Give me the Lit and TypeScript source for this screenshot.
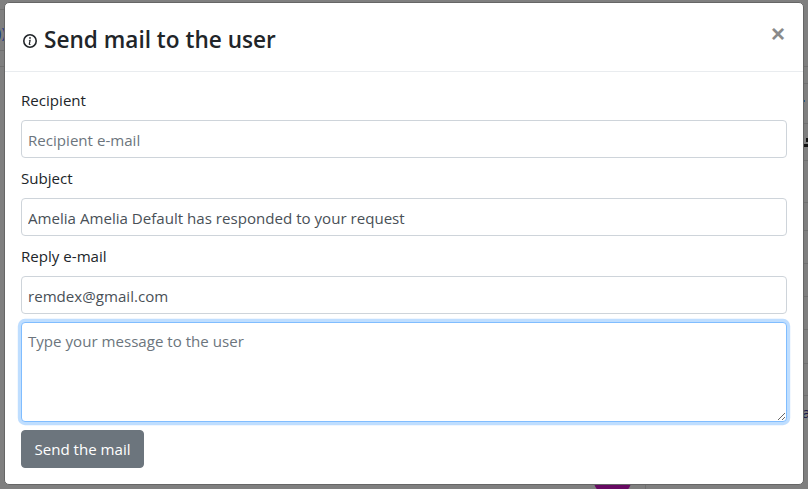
import { LitElement, html, css } from "lit";
import { customElement } from "lit/decorators.js";

const LEFT_LINES = [9, 50, 66];
const RIGHT_LINES = [66, 83, 123, 160, 202, 230, 263, 296, 329, 363, 395];

@customElement("app-root")
export class AppRoot extends LitElement {
  static styles = css`
    :host {
      display: block;
      position: relative;
      width: 808px;
      height: 489px;
      overflow: hidden;
      background: #7f7f7f;
      font-family: "Open Sans", "Noto Sans", sans-serif;
      color: #212529;
      box-sizing: border-box;
      padding: 2px 4px 0;
    }
    * { box-sizing: border-box; }
    .blob {
      position: absolute;
      left: 593px;
      top: 458px;
      width: 39px;
      height: 39px;
      border-radius: 50%;
      background: #660a62;
    }
    .vline { position: absolute; left: 645px; top: 480px; width: 1px; height: 9px; background: #707070; }
    .hl { position: absolute; height: 1px; background: #707070; width: 6px; }
    .hl.l { left: 0; }
    .hl.r { right: 0; }
    .paren {
      position: absolute;
      left: -3px;
      top: 22px;
      font-size: 15px;
      line-height: 20px;
      color: #1d3a86;
    }
    .letter {
      position: absolute;
      left: 802px;
      top: 402px;
      font-size: 15px;
      line-height: 20px;
      color: #1a1a4a;
    }
    .mark { position: absolute; background: #111; }
    .m1 { left: 806px; top: 138px; width: 2px; height: 4px; }
    .m2 { left: 804px; top: 144px; width: 4px; height: 3px; }
    .tick { position: absolute; left: 804px; top: 100px; width: 1px; height: 2px; background: #24557f; }
    .modal {
      position: relative;
      background: #fff;
      border: 1px solid #666;
      border-radius: 5px;
      height: 483px;
      display: flex;
      flex-direction: column;
    }
    .header {
      height: 69px;
      padding: 0 18px;
      border-bottom: 1px solid #e9ecef;
      display: flex;
      align-items: flex-start;
      justify-content: space-between;
    }
    .title {
      margin: 20px 0 0;
      font-size: 22.6px;
      line-height: 33px;
      font-weight: 600;
      display: flex;
      align-items: center;
      gap: 7px;
    }
    .title svg { margin-top: 3px; }
    .close {
      font-size: 24px;
      line-height: 24px;
      font-weight: 700;
      color: #8a8a8a;
      margin: 19px 0 0;
      font-family: "Liberation Sans", sans-serif;
    }
    .body {
      padding: 16px 16px 0;
      display: flex;
      flex-direction: column;
    }
    label {
      display: block;
      font-size: 15.1px;
      line-height: 24px;
      margin-bottom: 8px;
    }
    .input, .area {
      display: block;
      width: 100%;
      border: 1px solid #ced4da;
      border-radius: 4px;
      padding: 6px;
      margin-bottom: 8px;
      font: inherit;
      font-size: 15.1px;
      line-height: 24px;
      color: #495057;
      background: #fff;
      outline: none;
    }
    .input { height: 38px; padding: 7px 6px 5px; }
    .input::placeholder, .area::placeholder { color: #6c757d; opacity: 1; }
    .area {
      height: 100px;
      border-color: #80bdff;
      box-shadow: 0 0 0 3.2px rgba(0, 123, 255, 0.25);
      resize: both;
    }
    button {
      align-self: flex-start;
      width: 123px;
      height: 38px;
      padding: 0;
      border: 1px solid #6c757d;
      border-radius: 4px;
      background: #6c757d;
      color: #fff;
      font: inherit;
      font-size: 15.1px;
    }
  `;

  render() {
    return html`
      ${LEFT_LINES.map((y) => html`<div class="hl l" style="top:${y}px"></div>`)}
      ${RIGHT_LINES.map((y) => html`<div class="hl r" style="top:${y}px"></div>`)}
      <div class="paren">))</div>
      <div class="letter">a</div>
      <div class="mark m1"></div>
      <div class="mark m2"></div>
      <div class="tick"></div>
      <div class="blob"></div>
      <div class="vline"></div>
      <div class="modal">
        <div class="header">
          <h4 class="title">
            <svg width="14" height="14" viewBox="0 0 16 16" fill="#212529">
              <circle cx="8" cy="8" r="7.1" fill="none" stroke="#212529" stroke-width="1.8" />
              <path d="m8.93 6.59-2.29.28-.08.38.45.08c.29.07.35.18.29.47l-.74 3.47c-.2.9.1 1.32.8 1.32.55 0 1.18-.25 1.47-.6l.09-.42c-.2.18-.5.25-.7.25-.27 0-.37-.2-.3-.53L8.93 6.6zM9 4.5a1 1 0 1 1-2 0 1 1 0 0 1 2 0z" />
            </svg>
            Send mail to the user
          </h4>
          <span class="close">×</span>
        </div>
        <div class="body">
          <label>Recipient</label>
          <input class="input" placeholder="Recipient e-mail" />
          <label>Subject</label>
          <input class="input" value="Amelia Amelia Default has responded to your request" />
          <label>Reply e-mail</label>
          <input class="input" value="remdex@gmail.com" />
          <textarea class="area" placeholder="Type your message to the user"></textarea>
          <button>Send the mail</button>
        </div>
      </div>
    `;
  }
}
